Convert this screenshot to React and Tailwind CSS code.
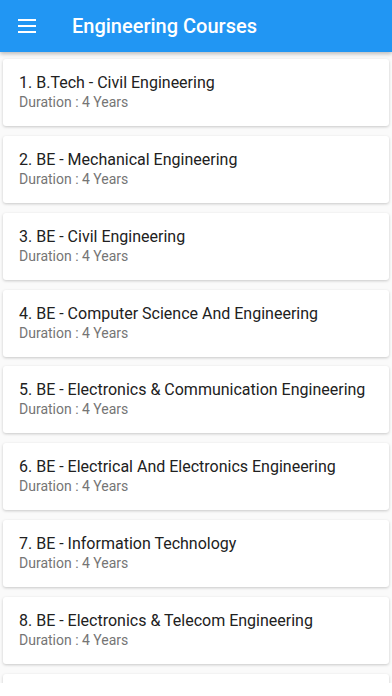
import React from 'react';

const courses = [
  'B.Tech - Civil Engineering',
  'BE - Mechanical Engineering',
  'BE - Civil Engineering',
  'BE - Computer Science And Engineering',
  'BE - Electronics & Communication Engineering',
  'BE - Electrical And Electronics Engineering',
  'BE - Information Technology',
  'BE - Electronics & Telecom Engineering',
];

const CourseCard = ({ index, name }) => (
  <div className="h-[67px] shrink-0 rounded-[3px] bg-white px-4 pt-[14px] shadow-[0_1px_3px_rgba(0,0,0,0.2)]">
    <div className="text-[16px] leading-5 text-[#212121]">
      {index}. {name}
    </div>
    <div className="text-[14px] leading-[18px] text-[#757575]">Duration : 4 Years</div>
  </div>
);

export default function App() {
  return (
    <div
      className="flex h-[696px] w-[392px] flex-col overflow-hidden bg-[#fafafa]"
      style={{ fontFamily: 'Roboto, "Liberation Sans", sans-serif' }}
    >
      <header className="z-10 flex h-[52px] shrink-0 items-center bg-[#2196f3] shadow-[0_2px_4px_rgba(0,0,0,0.25)]">
        <div className="flex w-[72px] justify-start pl-[18px]">
          <svg width="18" height="14" viewBox="0 0 18 14" fill="none">
            <rect x="0" y="0" width="18" height="2" fill="white" />
            <rect x="0" y="6" width="18" height="2" fill="white" />
            <rect x="0" y="12" width="18" height="2" fill="white" />
          </svg>
        </div>
        <h1 className="text-[20px] font-medium text-white">Engineering Courses</h1>
      </header>
      <div className="flex min-h-0 flex-1 flex-col gap-[9.85px] overflow-hidden px-[3px] pt-[7px]">
        {courses.map((c, i) => (
          <CourseCard key={c} index={i + 1} name={c} />
        ))}
        <div className="h-[67px] shrink-0 rounded-[3px] bg-white shadow-[0_1px_3px_rgba(0,0,0,0.2)]" />
      </div>
      <div className="h-[13px] shrink-0 bg-white" />
    </div>
  );
}
